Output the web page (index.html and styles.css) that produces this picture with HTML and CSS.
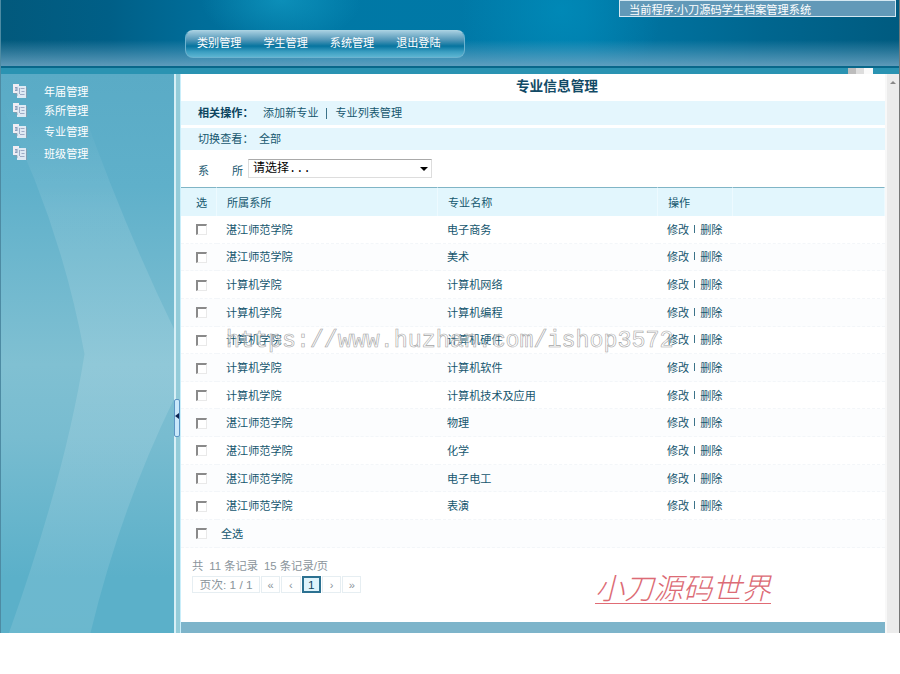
FILE: index.html
```html
<!DOCTYPE html>
<html lang="zh-CN">
<head>
  <meta charset="UTF-8" />
  <title>学生档案管理系统</title>
  <link rel="stylesheet" href="styles.css">
</head>
<body>
  <svg class="defs" width="0" height="0">
    <symbol id="doc" viewBox="0 0 14 14">
      <path d="M0 0h6v9H0z" fill="#f1edf3"/>
      <path d="M4 2h9v12H4z" fill="#dfeaf4"/>
      <path d="M2 3h2.500v4H2z" fill="#8b9fbd"/>
      <path d="M2 4.500h1.500v1H2z" fill="#f3edf2"/>
      <path d="M7.500 4.500h4M8.500 7.500h3M7 10.500h4.500M6.500 4v6" stroke="#9dabc6" stroke-width="1" fill="none"/>
      <path d="M1 9.500h3v2.500M13.500 3v11" stroke="#8a9bab" stroke-width="0.8" fill="none"/>
    </symbol>
  </svg>

  <div class="app">
    <div class="header">
      <div class="program">当前程序:小刀源码学生档案管理系统</div>
      <div class="nav">
        <a>类别管理</a>
        <a>学生管理</a>
        <a>系统管理</a>
        <a>退出登陆</a>
      </div>
      <div class="handle"></div>
    </div>

    <div class="body">
      <div class="sidebar">
        <svg class="rays" viewBox="0 0 174 559" preserveAspectRatio="none">
          <defs>
            <linearGradient id="ray" x1="0" y1="0" x2="0" y2="1">
              <stop offset="0" stop-color="#fff" stop-opacity="0"/>
              <stop offset="0.2" stop-color="#fff" stop-opacity="0.1"/>
              <stop offset="0.5" stop-color="#fff" stop-opacity="0.13"/>
              <stop offset="1" stop-color="#fff" stop-opacity="0.1"/>
            </linearGradient>
          </defs>
          <path d="M0 30Q60 150 84 280Q65 400 8 559H90Q120 435 174 325V255Q125 155 80 30Z" fill="url(#ray)"/>
        </svg>
        <ul class="menu">
          <li><svg class="icon"><use href="#doc"/></svg>年届管理</li>
          <li><svg class="icon"><use href="#doc"/></svg>系所管理</li>
          <li><svg class="icon"><use href="#doc"/></svg>专业管理</li>
          <li><svg class="icon"><use href="#doc"/></svg>班级管理</li>
        </ul>
      </div>

      <div class="splitter"><div class="toggle"></div></div>

      <div class="content">
        <h1>专业信息管理</h1>
        <div class="bar actions"><b>相关操作：</b><a>添加新专业</a><i></i><a>专业列表管理</a></div>
        <div class="bar switch"><span>切换查看：</span><a>全部</a></div>
        <div class="filter">
          <span class="label"><span>系</span><span>所</span></span>
          <div class="select">请选择<span class="dots">...</span></div>
        </div>

        <table class="list">
          <colgroup><col class="c1"><col class="c2"><col class="c3"><col class="c4"><col></colgroup>
          <tr><th>选</th><th>所属系所</th><th>专业名称</th><th>操作</th><th></th></tr>
          <tr><td><span class="check"></span></td><td>湛江师范学院</td><td>电子商务</td><td>修改<i></i>删除</td><td></td></tr>
          <tr><td><span class="check"></span></td><td>湛江师范学院</td><td>美术</td><td>修改<i></i>删除</td><td></td></tr>
          <tr><td><span class="check"></span></td><td>计算机学院</td><td>计算机网络</td><td>修改<i></i>删除</td><td></td></tr>
          <tr><td><span class="check"></span></td><td>计算机学院</td><td>计算机编程</td><td>修改<i></i>删除</td><td></td></tr>
          <tr><td><span class="check"></span></td><td>计算机学院</td><td>计算机硬件</td><td>修改<i></i>删除</td><td></td></tr>
          <tr><td><span class="check"></span></td><td>计算机学院</td><td>计算机软件</td><td>修改<i></i>删除</td><td></td></tr>
          <tr><td><span class="check"></span></td><td>计算机学院</td><td>计算机技术及应用</td><td>修改<i></i>删除</td><td></td></tr>
          <tr><td><span class="check"></span></td><td>湛江师范学院</td><td>物理</td><td>修改<i></i>删除</td><td></td></tr>
          <tr><td><span class="check"></span></td><td>湛江师范学院</td><td>化学</td><td>修改<i></i>删除</td><td></td></tr>
          <tr><td><span class="check"></span></td><td>湛江师范学院</td><td>电子电工</td><td>修改<i></i>删除</td><td></td></tr>
          <tr><td><span class="check"></span></td><td>湛江师范学院</td><td>表演</td><td>修改<i></i>删除</td><td></td></tr>
          <tr class="all"><td><span class="check"></span></td><td colspan="4">全选</td></tr>
        </table>

        <div class="total"><span>共</span><span>11 条记录</span><span>15 条记录/页</span></div>
        <div class="pager">
          <span class="pages">页次: 1 / 1</span>
          <span>«</span>
          <span>‹</span>
          <span class="current">1</span>
          <span>›</span>
          <span>»</span>
        </div>
        <div class="footer"></div>
      </div>

      <div class="scrollbar"><div class="up"></div></div>
    </div>

    <div class="watermark">https://www.huzhan.com/ishop3572</div>
    <div class="brand">小刀源码世界</div>
  </div>
</body>
</html>
```
FILE: styles.css
```css
* {
  margin: 0;
  padding: 0;
  box-sizing: border-box;
}

body {
  background: #fff;
  font-family: "Liberation Sans", "Noto Sans CJK SC", sans-serif;
  font-size: 11.1px;
  color: #15566e;
}

i {
  font-style: normal;
}

.defs {
  display: block;
}

.app {
  position: relative;
  width: 900px;
  height: 633px;
  border-left: 1px solid #4d8ba3;
  border-right: 1px solid #777;
  overflow: hidden;
}

/* header */
.header {
  position: relative;
  height: 74px;
  background:
    linear-gradient(to bottom, transparent 66px, #08678a 66px, #08678a 68px, #2a93b2 68px),
    linear-gradient(to bottom, rgba(110, 165, 197, 0) 40px, rgba(110, 165, 195, 0.85) 66px),
    radial-gradient(ellipse 80px 45px at 280px 0, rgba(20, 160, 200, 0.6), transparent),
    radial-gradient(ellipse 100px 100px at 560px 10px, rgba(0, 155, 200, 0.45), transparent),
    linear-gradient(to right, #02597c, #005f87 12%, #006d99 22%, #0078a5 35%, #0079a8 65%, #00668f 85%, #005b80);
}

.program {
  position: absolute;
  top: 0;
  right: 3px;
  width: 277px;
  height: 17px;
  padding-left: 9px;
  border: 1px solid #d5e8f2;
  background: #6299b8;
  color: #fff;
  font-size: 11.2px;
  line-height: 18px;
  overflow: hidden;
}

.nav {
  position: absolute;
  top: 30px;
  left: 184px;
  display: flex;
  gap: 22px;
  width: 280px;
  height: 28px;
  padding-left: 11px;
  border-radius: 8px;
  border: 1px solid #6cb3cf;
  border-top-color: #a9d2e2;
  background: linear-gradient(to bottom, #a4cddf, #5196b7 35%, #06749f 58%, #3b9ec1 80%, #5db5d2);
  color: #fff;
  line-height: 24px;
}

.handle {
  position: absolute;
  top: 68px;
  left: 847px;
  width: 25px;
  height: 6px;
  background: linear-gradient(to right, #bcbcbc 8px, #ddd 8px, #ddd 16px, #fafafa 16px);
}

.body {
  display: flex;
  height: 559px;
}

/* sidebar */
.sidebar {
  position: relative;
  width: 173px;
  background: linear-gradient(to bottom, #5aabc6, #5fb0ca 20%, #80c0d2 52%, #78bcd0 65%, #5bb0c9 90%);
}

.rays {
  position: absolute;
  top: 0;
  left: 0;
  width: 100%;
  height: 100%;
}

.menu {
  position: relative;
  list-style: none;
  padding-top: 7px;
  color: #fff;
}

.menu li {
  display: flex;
  align-items: center;
  gap: 17px;
  height: 22px;
  padding-left: 12px;
}

.menu li:first-child {
  height: 19px;
}

.menu li:nth-child(2) {
  height: 20px;
}

.icon {
  width: 14px;
  height: 14px;
}

.splitter {
  width: 6px;
  padding-top: 325px;
  border-left: 2px solid #d7eff6;
  background: #94ccd9;
}

.toggle {
  width: 6px;
  height: 38px;
  margin-left: -2px;
  padding: 13px 0 0 1px;
  border: 1px solid #5b95c4;
  border-radius: 2px;
  background: #c9e8fa;
}

.toggle::before {
  content: "";
  display: block;
  width: 0;
  margin-left: -1px;
  border: 3px solid transparent;
  border-left: 0;
  border-right: 4px solid #0b2350;
}

/* content */
.content {
  display: flex;
  flex-direction: column;
  width: 705px;
  border-left: 1px solid #c9eefa;
  background: #fff;
}

h1 {
  height: 27px;
  padding-left: 48px;
  font-size: 13.7px;
  line-height: 25px;
  text-align: center;
  color: #124a66;
}

.bar {
  display: flex;
  padding-left: 17px;
  background: #e4f6fd;
}

.actions {
  height: 24px;
  margin-bottom: 3px;
  line-height: 25px;
}

.actions b {
  width: 65px;
  color: #0d4560;
}

.actions i {
  width: 1px;
  height: 11px;
  margin: 7px 8px 0;
  background: #3c7389;
}

.switch {
  height: 22px;
  line-height: 22px;
}

.switch span {
  width: 61px;
}

.filter {
  display: flex;
  height: 37px;
  padding: 9px 0 0 17px;
}

.label {
  display: flex;
  justify-content: space-between;
  width: 45px;
  margin-right: 5px;
  line-height: 24px;
}

.select {
  position: relative;
  width: 184px;
  height: 19px;
  padding-left: 4px;
  border: 1px solid #ddd;
  border-top-color: #aaa;
  color: #000;
  font-size: 12px;
  line-height: 17px;
}

.dots {
  font-family: "Liberation Mono", monospace;
}

.select::after {
  content: "";
  position: absolute;
  top: 7px;
  right: 3px;
  border: 4px solid transparent;
  border-top-color: #000;
  border-bottom: 0;
}

.list {
  width: 704px;
  table-layout: fixed;
  border-collapse: separate;
  border-spacing: 0;
}

.c1 { width: 36px; }
.c2 { width: 221px; }
.c3 { width: 220px; }
.c4 { width: 75px; }

.list th {
  height: 29px;
  padding: 0 0 1px 10px;
  border-top: 1px solid #80b5c6;
  border-right: 1px solid #edfaff;
  background: #e2f6fd;
  font-weight: normal;
  text-align: left;
}

.list th:first-child {
  padding-left: 15px;
}

.list td {
  height: 27.65px;
  padding: 0 0 1px 9px;
  border-bottom: 1px dashed #f3f6f9;
}

.list td:first-child {
  padding: 1px 0 0 15px;
}

.list tr:nth-child(odd) td {
  background: #fcfdfe;
}

.list td i {
  display: inline-block;
  width: 1px;
  height: 8px;
  margin: 0 5px;
  background: #3c7389;
  vertical-align: 1px;
}

.list .all td + td {
  padding-left: 4px;
}

.check {
  display: block;
  width: 11px;
  height: 11px;
  border: 1px solid #e9e9e9;
  border-top: 2px solid #8a8a8a;
  border-left: 2px solid #8a8a8a;
  background: #fff;
}

.total {
  display: flex;
  gap: 6px;
  height: 17px;
  margin-top: 10px;
  padding-left: 11px;
  color: #8a949b;
  font-size: 11.3px;
  line-height: 17px;
}

.pager {
  display: flex;
  gap: 1px;
  margin-top: 1px;
  padding-left: 11px;
  color: #8a949b;
  line-height: 16px;
}

.pager span {
  width: 19.3px;
  height: 17px;
  border: 1px solid #e6eef2;
  text-align: center;
}

.pager .pages {
  width: 68px;
  font-size: 11.8px;
}

.pager .current {
  border: 2px solid #2c7191;
  background: #dff3fb;
  color: #12445c;
  font-size: 11.8px;
  line-height: 14px;
}

.footer {
  height: 11px;
  margin-top: auto;
  background: #7db4ca;
}

.scrollbar {
  flex: 1;
  border-left: 2px solid #f8f8f8;
  background: #ececec;
}

.up {
  width: 0;
  margin: 7px auto 0;
  border: 3px solid transparent;
  border-top: 0;
  border-bottom-color: #888;
}

/* overlays */
.watermark {
  position: absolute;
  top: 327px;
  left: 225px;
  font-family: "Liberation Mono", monospace;
  font-size: 23.3px;
  line-height: 28px;
  white-space: nowrap;
  color: rgba(255, 255, 255, 0.4);
  -webkit-text-stroke: 0.6px #a5a5a5;
}

.brand {
  position: absolute;
  top: 573px;
  left: 594px;
  width: 176px;
  height: 31px;
  border-bottom: 1px solid #e06c75;
  color: #dc6b75;
  font-size: 29.3px;
  font-style: italic;
  font-weight: 300;
  line-height: 31px;
  white-space: nowrap;
}
```
